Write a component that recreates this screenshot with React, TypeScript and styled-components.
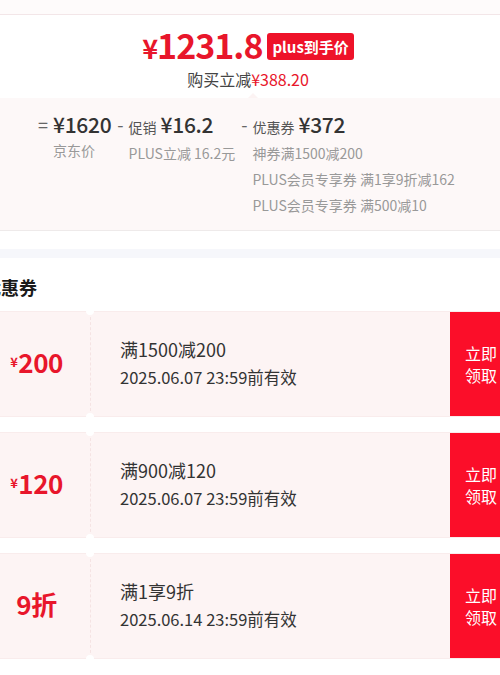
import React from 'react'
import styled, { createGlobalStyle } from 'styled-components'

const GlobalStyle = createGlobalStyle`
  html, body {
    margin: 0;
    padding: 0;
    background: #fff;
    overflow-x: hidden;
  }
  body {
    font-family: "Noto Sans CJK SC", "Noto Sans", sans-serif;
    color: #333;
  }
`

const Page = styled.div`
  width: 530px;
  margin-left: -17px;
`

const TopStrip = styled.div`
  height: 14px;
  background: #fefbfb;
  border-bottom: 1px solid #f3e6e8;
`

const PriceSection = styled.div`
  padding: 10px 0 7px;
  display: flex;
  flex-direction: column;
  align-items: center;
`

const PriceRow = styled.div`
  display: flex;
  align-items: center;
  gap: 5px;
  height: 40px;
`

const BigPrice = styled.span`
  display: block;
  color: #e8162b;
  font-size: 34px;
  font-weight: 700;
  letter-spacing: -1px;
  line-height: 1;

  small {
    font-size: 27px;
  }
`

const Badge = styled.span`
  background: #ee1229;
  color: #fff;
  font-size: 15px;
  font-weight: 700;
  line-height: 27px;
  padding: 0 5px;
  border-radius: 3px;
  margin-top: 2px;
`

const SaveLine = styled.div`
  margin-top: 3px;
  font-size: 16px;
  line-height: 23px;
  color: #444;

  em {
    font-style: normal;
    color: #e8162b;
  }
`

const Breakdown = styled.div`
  position: relative;
  background: #fdf8f8;
  border-bottom: 1px solid #eeeaea;
  padding: 13px 0 12px 55px;
  display: flex;
  gap: 6px;

  &::before {
    content: '';
    position: absolute;
    top: -5px;
    left: 265px;
    border-left: 5px solid transparent;
    border-right: 5px solid transparent;
    border-bottom: 5px solid #fcf3f3;
  }
`

const Column = styled.div`
  display: flex;
  align-items: flex-start;
`

const Sign = styled.span`
  font-size: 18px;
  line-height: 26px;
  color: #666;
  margin-right: 5px;
`

const ColBody = styled.div`
  display: flex;
  flex-direction: column;
`

const MainLine = styled.div`
  display: flex;
  align-items: baseline;
  gap: 4px;
  line-height: 26px;
  white-space: nowrap;
`

const Label = styled.span`
  font-size: 14px;
  color: #555;
`

const Amount = styled.span`
  font-size: 21px;
  font-weight: 500;
  color: #333;
  letter-spacing: -0.3px;
`

const Sub = styled.div`
  font-size: 14px;
  line-height: 26px;
  color: #999;
  white-space: nowrap;
`

const Gap = styled.div`
  height: 18px;
`

const GrayBand = styled.div`
  height: 9px;
  background: #f6f7fb;
`

const CouponSection = styled.div`
  padding-top: 17px;
`

const SectionTitle = styled.div`
  font-size: 18px;
  font-weight: 700;
  color: #1a1a1a;
  line-height: 24px;
  margin-bottom: 12px;
`

const CouponList = styled.div`
  display: flex;
  flex-direction: column;
  gap: 15px;
`

const Card = styled.div`
  display: flex;
  height: 106px;
  background: #fdf4f4;
  border-top: 1px solid #f9ecec;
  border-bottom: 1px solid #f9ecec;
  box-sizing: border-box;
`

const Face = styled.div`
  width: 107px;
  padding-bottom: 6px;
  box-sizing: border-box;
  display: flex;
  align-items: center;
  justify-content: center;
  color: #e8162b;
  font-size: 26px;
  font-weight: 700;
  letter-spacing: -0.5px;

  small {
    font-size: 13px;
    margin-right: 1px;
  }
`

const Divider = styled.div`
  position: relative;
  width: 5px;
  border-left: 1px dashed #f5e3e3;

  &::before,
  &::after {
    content: '';
    position: absolute;
    left: -5px;
    width: 8px;
    height: 8px;
    border-radius: 50%;
    background: #fff;
  }
  &::before {
    top: -5px;
  }
  &::after {
    bottom: -5px;
  }
`

const Info = styled.div`
  flex: 1;
  display: flex;
  flex-direction: column;
  justify-content: center;
  padding-left: 24px;
  padding-bottom: 2px;
`

const Rule = styled.div`
  font-size: 18px;
  line-height: 28px;
  color: #333;
`

const Expire = styled.div`
  font-size: 16.5px;
  line-height: 28px;
  color: #333;
`

const TakeButton = styled.button`
  width: 63px;
  border: none;
  background: #fb0e29;
  color: #fff;
  font-family: inherit;
  font-size: 16px;
  line-height: 22px;
  text-align: left;
  padding: 0 0 0 15px;
  cursor: pointer;
`

const coupons = [
  { face: '200', yen: true, rule: '满1500减200', expire: '2025.06.07 23:59前有效' },
  { face: '120', yen: true, rule: '满900减120', expire: '2025.06.07 23:59前有效' },
  { face: '9折', yen: false, rule: '满1享9折', expire: '2025.06.14 23:59前有效' },
]

const App = () => {
  return (
    <>
      <GlobalStyle />
      <Page>
        <TopStrip />
        <PriceSection>
          <PriceRow>
            <BigPrice><small>¥</small>1231.8</BigPrice>
            <Badge>plus到手价</Badge>
          </PriceRow>
          <SaveLine>购买立减<em>¥388.20</em></SaveLine>
        </PriceSection>

        <Breakdown>
          <Column>
            <Sign>=</Sign>
            <ColBody>
              <MainLine><Amount>¥1620</Amount></MainLine>
              <Sub>京东价</Sub>
            </ColBody>
          </Column>
          <Column>
            <Sign>-</Sign>
            <ColBody>
              <MainLine><Label>促销</Label><Amount>¥16.2</Amount></MainLine>
              <Sub>PLUS立减 16.2元</Sub>
            </ColBody>
          </Column>
          <Column>
            <Sign>-</Sign>
            <ColBody>
              <MainLine><Label>优惠券</Label><Amount>¥372</Amount></MainLine>
              <Sub>神券满1500减200</Sub>
              <Sub>PLUS会员专享券 满1享9折减162</Sub>
              <Sub>PLUS会员专享券 满500减10</Sub>
            </ColBody>
          </Column>
        </Breakdown>

        <Gap />
        <GrayBand />

        <CouponSection>
          <SectionTitle>优惠券</SectionTitle>
          <CouponList>
            {coupons.map((c) => (
              <Card key={c.rule}>
                <Face>
                  {c.yen && <small>¥</small>}
                  {c.face}
                </Face>
                <Divider />
                <Info>
                  <Rule>{c.rule}</Rule>
                  <Expire>{c.expire}</Expire>
                </Info>
                <TakeButton>立即<br />领取</TakeButton>
              </Card>
            ))}
          </CouponList>
        </CouponSection>
      </Page>
    </>
  )
}

export default App
